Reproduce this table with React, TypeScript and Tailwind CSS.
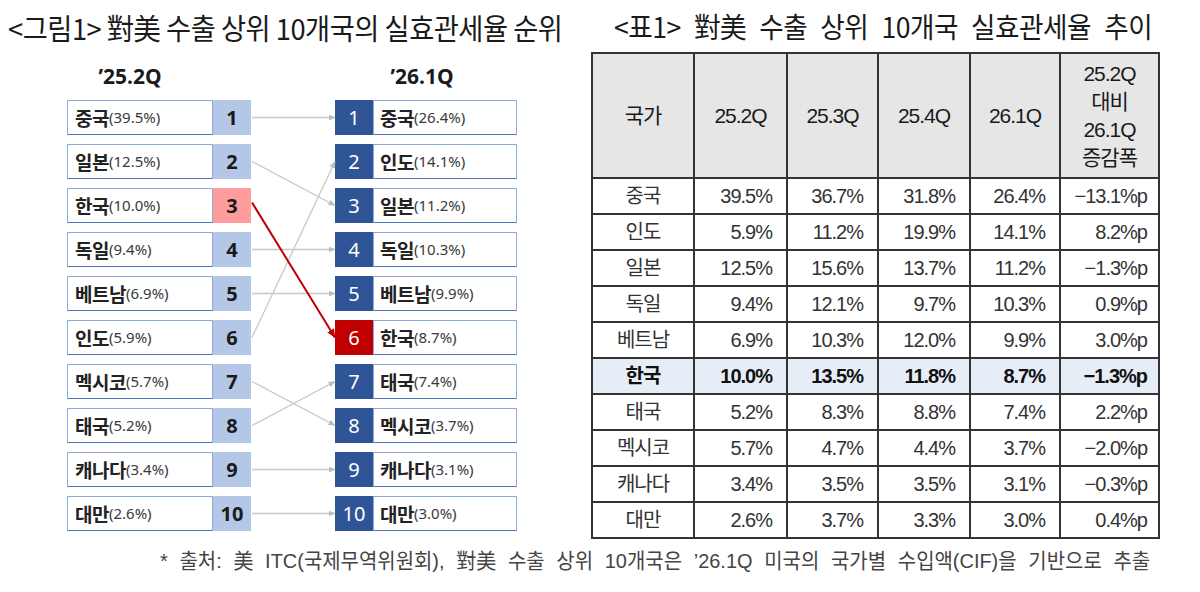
import React from "react";

const leftRows = [
  { name: "중국", pct: "(39.5%)", n: "1" },
  { name: "일본", pct: "(12.5%)", n: "2" },
  { name: "한국", pct: "(10.0%)", n: "3", hl: true },
  { name: "독일", pct: "(9.4%)", n: "4" },
  { name: "베트남", pct: "(6.9%)", n: "5" },
  { name: "인도", pct: "(5.9%)", n: "6" },
  { name: "멕시코", pct: "(5.7%)", n: "7" },
  { name: "태국", pct: "(5.2%)", n: "8" },
  { name: "캐나다", pct: "(3.4%)", n: "9" },
  { name: "대만", pct: "(2.6%)", n: "10" },
];

const rightRows = [
  { name: "중국", pct: "(26.4%)", n: "1" },
  { name: "인도", pct: "(14.1%)", n: "2" },
  { name: "일본", pct: "(11.2%)", n: "3" },
  { name: "독일", pct: "(10.3%)", n: "4" },
  { name: "베트남", pct: "(9.9%)", n: "5" },
  { name: "한국", pct: "(8.7%)", n: "6", hl: true },
  { name: "태국", pct: "(7.4%)", n: "7" },
  { name: "멕시코", pct: "(3.7%)", n: "8" },
  { name: "캐나다", pct: "(3.1%)", n: "9" },
  { name: "대만", pct: "(3.0%)", n: "10" },
];

const links: [number, number][] = [
  [0, 0],
  [1, 2],
  [3, 3],
  [4, 4],
  [5, 1],
  [6, 7],
  [7, 6],
  [8, 8],
  [9, 9],
];

const tableRows = [
  ["중국", "39.5%", "36.7%", "31.8%", "26.4%", "−13.1%p"],
  ["인도", "5.9%", "11.2%", "19.9%", "14.1%", "8.2%p"],
  ["일본", "12.5%", "15.6%", "13.7%", "11.2%", "−1.3%p"],
  ["독일", "9.4%", "12.1%", "9.7%", "10.3%", "0.9%p"],
  ["베트남", "6.9%", "10.3%", "12.0%", "9.9%", "3.0%p"],
  ["한국", "10.0%", "13.5%", "11.8%", "8.7%", "−1.3%p"],
  ["태국", "5.2%", "8.3%", "8.8%", "7.4%", "2.2%p"],
  ["멕시코", "5.7%", "4.7%", "4.4%", "3.7%", "−2.0%p"],
  ["캐나다", "3.4%", "3.5%", "3.5%", "3.1%", "−0.3%p"],
  ["대만", "2.6%", "3.7%", "3.3%", "3.0%", "0.4%p"],
];

const colW = ["w-[102px]", "w-[93px]", "w-[91px]", "w-[92px]", "w-[90px]", "w-[99px]"];

function NameBox({ name, pct, w, pl }: { name: string; pct: string; w: string; pl: string }) {
  return (
    <div className={w + " " + pl + " h-full border border-[#8faadc] border-b-[#4f76bd] bg-white flex items-center whitespace-nowrap"}>
      <span className="text-[19px] font-bold text-[#222] font-['Noto_Sans_CJK_KR',sans-serif] leading-none tracking-[-0.5px]">{name}</span>
      <span className="text-[15px] text-[#3a3a3a] font-['Noto_Sans','Noto_Sans_CJK_KR',sans-serif] leading-none">{pct}</span>
    </div>
  );
}

function Diagram() {
  const cy = (i: number) => 17.5 + 44 * i;
  const x1 = 184;
  const x2 = 268;
  return (
    <div className="relative ml-[67px] flex flex-col gap-[9px]">
      {leftRows.map((l, i) => {
        const r = rightRows[i];
        return (
          <div key={i} className="flex h-[35px]">
            <NameBox name={l.name} pct={l.pct} w="w-[146px]" pl="pl-[7px]" />
            <div
              className={
                "w-[38px] h-full flex items-center justify-center text-[20px] font-bold text-[#1a1a1a] font-['Noto_Sans',sans-serif] " +
                (l.hl ? "bg-[#ff9d9d]" : "bg-[#b4c7e7]")
              }
            >
              {l.n}
            </div>
            <div className="w-[84px]" />
            <div
              className={
                "w-[38px] h-full flex items-center justify-center text-[20px] text-white font-['Noto_Sans',sans-serif] " +
                (r.hl ? "bg-[#c00000]" : "bg-[#2f5597]")
              }
            >
              {r.n}
            </div>
            <NameBox name={r.name} pct={r.pct} w="w-[144px]" pl="pl-[6px]" />
          </div>
        );
      })}
      <svg className="absolute left-0 top-0 pointer-events-none" width="452" height="440" viewBox="0 0 452 440">
        <defs>
          <marker id="ag" markerWidth="7" markerHeight="6" refX="6.5" refY="3" orient="auto" markerUnits="userSpaceOnUse">
            <path d="M0,0 L7,3 L0,6 Z" fill="#bdbdbd" />
          </marker>
          <marker id="ar" markerWidth="9" markerHeight="8" refX="8.5" refY="4" orient="auto" markerUnits="userSpaceOnUse">
            <path d="M0,0 L9,4 L0,8 Z" fill="#c00000" />
          </marker>
        </defs>
        {links.map(([a, b], k) => (
          <line key={k} x1={x1 + 1} y1={cy(a)} x2={x2} y2={cy(b)} stroke="#c8c8c8" strokeWidth="1.3" markerEnd="url(#ag)" />
        ))}
        <line x1={x1 + 1} y1={cy(2) - 3} x2={x2} y2={cy(5)} stroke="#c00000" strokeWidth="2" markerEnd="url(#ar)" />
      </svg>
    </div>
  );
}

export default function App() {
  const tfont = "font-['Liberation_Sans','Noto_Sans_CJK_KR',sans-serif]";
  return (
    <div className="w-[1200px] h-[592px] bg-white overflow-hidden text-[#1a1a1a]">
      <div className="flex h-[540px]">
        {/* Left figure */}
        <div className="w-[590px] shrink-0">
          <div className="h-[54px] pl-[8px] flex items-center whitespace-nowrap">
            <span className="inline-block origin-left scale-x-[0.94] text-[29px] leading-none text-[#1a1a1a] font-['Noto_Sans_CJK_KR',sans-serif] tracking-[-0.5px]">
              &lt;그림1&gt; 對美 수출 상위 10개국의 실효관세율 순위
            </span>
          </div>
          <div className="h-[46px] flex items-center pl-[57px] text-[21px] font-bold text-[#1a1a1a] font-['Noto_Sans',sans-serif]">
            <div className="w-[146px] text-center">’25.2Q</div>
            <div className="w-[128px]" />
            <div className="w-[182px] text-center">’26.1Q</div>
          </div>
          <Diagram />
        </div>

        {/* Right table */}
        <div className="flex-1">
          <div className="h-[52px] pl-[24px] flex items-center whitespace-nowrap">
            <span className="inline-block origin-left scale-x-[0.95] text-[28px] leading-none text-[#1a1a1a] font-['Noto_Sans_CJK_KR',sans-serif] tracking-[-0.5px] [word-spacing:8px]">
              &lt;표1&gt; 對美 수출 상위 10개국 실효관세율 추이
            </span>
          </div>
          <table className={"ml-[1px] border-collapse table-fixed border-2 border-[#333] " + tfont}>
            <thead>
              <tr className="h-[125px] bg-[#e6e6e6]">
                {["국가", "25.2Q", "25.3Q", "25.4Q", "26.1Q"].map((h, i) => (
                  <th key={i} className={colW[i] + " border-2 border-[#333] font-normal text-[21px] tracking-[-1px] text-center align-middle"}>
                    {h}
                  </th>
                ))}
                <th className={colW[5] + " border-2 border-[#333] font-normal text-[21px] tracking-[-1px] text-center align-middle leading-[28px]"}>
                  25.2Q
                  <br />
                  대비
                  <br />
                  26.1Q
                  <br />
                  증감폭
                </th>
              </tr>
            </thead>
            <tbody>
              {tableRows.map((row, ri) => {
                const kr = row[0] === "한국";
                return (
                  <tr key={ri} className={"h-[36px] " + (kr ? "bg-[#e6edf7]" : "bg-white")}>
                    {row.map((c, ci) => (
                      <td
                        key={ci}
                        className={
                          "border-2 border-[#333] text-[20px] leading-none tracking-[-1px] " +
                          (kr ? "text-[#111] font-semibold " : "text-[#333] ") +
                          (ci === 0 ? "text-center text-[#1a1a1a]" : ci === 5 ? "text-right pr-[11px]" : "text-right pr-[14px]")
                        }
                      >
                        {c}
                      </td>
                    ))}
                  </tr>
                );
              })}
            </tbody>
          </table>
        </div>
      </div>
      <div className="pl-[160px] mt-[8px] h-[24px] flex items-center whitespace-nowrap">
        <span className="inline-block origin-left scale-x-[0.95] text-[21px] leading-none text-[#444] font-['Liberation_Sans','Noto_Sans_CJK_KR',sans-serif] [word-spacing:6.5px]">
          * 출처: 美 ITC(국제무역위원회), 對美 수출 상위 10개국은 ’26.1Q 미국의 국가별 수입액(CIF)을 기반으로 추출
        </span>
      </div>
    </div>
  );
}
